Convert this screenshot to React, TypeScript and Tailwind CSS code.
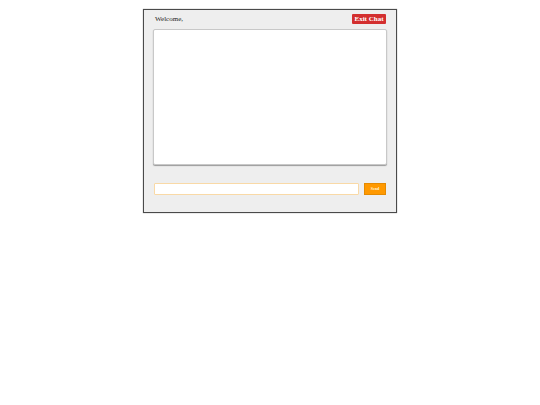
export default function App() {
	return (
		<div className="min-h-[405px] bg-white pt-[9px] font-['Liberation_Serif',serif]">
			<div className="mx-auto h-[204px] w-[254px] border border-[#4a4a4a] bg-[#eeeeee] px-[9px] shadow-[0_0_1px_#888]">
				<div className="flex h-[19px] items-start justify-between pt-[4px]">
					<p className="pl-[2px] text-[7px] leading-[10px] text-[#222]">Welcome,</p>
					<button
						type="button"
						className="mr-[1px] h-[10px] w-[34px] rounded-[1px] bg-[#d32f2f] text-[7px] font-bold leading-[10px] text-white"
					>
						Exit Chat
					</button>
				</div>
				<div className="h-[136px] w-full rounded-[2px] border border-[#c8c8c8] bg-white shadow-[0_1px_1px_#999]" />
				<form className="mt-[18px] flex items-center gap-[5px] pl-[1px]">
					<input
						type="text"
						className="h-[12px] w-[205px] rounded-[1px] border border-[#f9d9a6] bg-white pl-[1px]"
					/>
					<button
						type="button"
						className="h-[12px] w-[22px] border border-[#e58a00] bg-[#ff9900] text-[4px] font-bold text-[#fff3dc]"
					>
						Send
					</button>
				</form>
			</div>
		</div>
	);
}
